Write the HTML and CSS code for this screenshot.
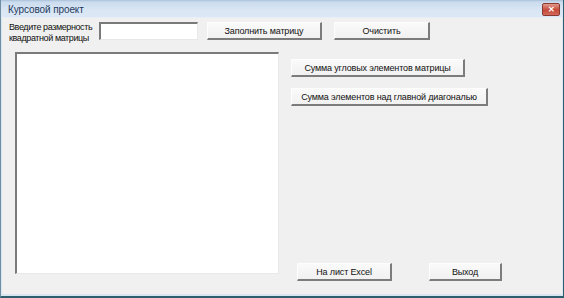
FILE: index.html
```html
<!DOCTYPE html>
<html>
<head>
<meta charset="utf-8">
<link rel="stylesheet" href="styles.css">
</head>
<body>
<div class="window">
  <div class="titlebar">
    <span class="title">Курсовой проект</span>
    <span class="close">✕</span>
  </div>
  <div class="content">
    <div class="row1">
      <div class="label">Введите размерность<br>квадратной матрицы</div>
      <div class="textbox"></div>
      <div class="btn btn-fill">Заполнить матрицу</div>
      <div class="btn btn-clear">Очистить</div>
    </div>
    <div class="row2">
      <div class="listbox"></div>
      <div class="rightcol">
        <div class="btn btn-corner">Сумма угловых элементов матрицы</div>
        <div class="btn btn-diag">Сумма элементов над главной диагональю</div>
        <div class="bottomrow">
          <div class="btn btn-excel">На лист Excel</div>
          <div class="btn btn-exit">Выход</div>
        </div>
      </div>
    </div>
  </div>
</div>
</body>
</html>
```
FILE: styles.css
```css
* { box-sizing: border-box; }
html, body { margin: 0; padding: 0; }
body {
  width: 564px;
  height: 298px;
  overflow: hidden;
  font-family: "Liberation Sans", Arial, sans-serif;
  background: #f0f0f0;
}
.window {
  width: 564px;
  height: 298px;
  background: #f0f0f0;
  border-left: 1px solid #6f8ea3;
  border-right: 1px solid #2f5f6e;
  border-bottom: 2px solid #2f5f6e;
  display: flex;
  flex-direction: column;
}
.titlebar {
  height: 18px;
  flex: none;
  background: linear-gradient(#a9c0d8 0px, #cbdcee 2px, #d9e6f4 10px, #dce8f5 18px);
  border-bottom: 1px solid #e6eef7;
  display: flex;
  align-items: center;
  justify-content: space-between;
  padding: 0 3px 0 7px;
}
.title {
  font-size: 10px;
  color: #1e3a5f;
  letter-spacing: -0.1px;
  margin-top: 1px;
}
.close {
  width: 18px;
  height: 13px;
  background: linear-gradient(#e09a8c, #c7493a 55%, #d06a5c);
  border: 1px solid #8a3a30;
  border-radius: 2px;
  color: #fff;
  font-size: 8px;
  font-weight: bold;
  line-height: 11px;
  text-align: center;
  margin-top: 1px;
}
.content {
  flex: 1;
  padding: 3px 0 0 13px;
  border-left: 1px solid #d8e6f0;
  border-right: 1px solid #d8e6f0;
  border-bottom: 2px solid #d8e6f0;
}
.row1 {
  display: flex;
  align-items: flex-start;
  height: 31px;
}
.label {
  font-size: 9px;
  line-height: 11px;
  color: #111;
  margin-left: -6px;
  width: 90px;
  white-space: nowrap;
  letter-spacing: -0.4px;
  padding-top: 1px;
}
.textbox {
  width: 99px;
  height: 18px;
  margin-top: 1px;
  background: #fff;
  border-top: 2px solid #7a7a7a;
  border-left: 2px solid #7a7a7a;
  border-right: 1px solid #e8e8e8;
  border-bottom: 1px solid #e8e8e8;
}
.btn {
  height: 18px;
  font-size: 9px;
  letter-spacing: -0.15px;
  color: #111;
  background: linear-gradient(#fafafa, #f1f1f1);
  border-top: 1px solid #fdfdfd;
  border-left: 1px solid #fdfdfd;
  border-right: 2px solid #7c7c7c;
  border-bottom: 2px solid #7c7c7c;
  display: flex;
  align-items: center;
  justify-content: center;
  white-space: nowrap;
  flex: none;
}
.btn-fill { width: 115px; margin-left: 9px; margin-top: 1px; }
.btn-clear { width: 96px; margin-left: 12px; margin-top: 1px; }
.row2 {
  display: flex;
  align-items: flex-start;
}
.listbox {
  width: 264px;
  height: 222px;
  background: #fff;
  border-top: 2px solid #7a7a7a;
  border-left: 2px solid #7a7a7a;
  border-right: 1px solid #e8e8e8;
  border-bottom: 1px solid #e8e8e8;
}
.rightcol {
  margin-left: 12px;
  height: 229px;
  display: flex;
  flex-direction: column;
  align-items: flex-start;
}
.btn-corner { width: 174px; margin-top: 7px; }
.btn-diag { width: 197px; margin-top: 11px; }
.bottomrow {
  margin-top: auto;
  display: flex;
}
.btn-excel { width: 95px; margin-left: 6px; }
.btn-exit { width: 73px; margin-left: 37px; }
```
